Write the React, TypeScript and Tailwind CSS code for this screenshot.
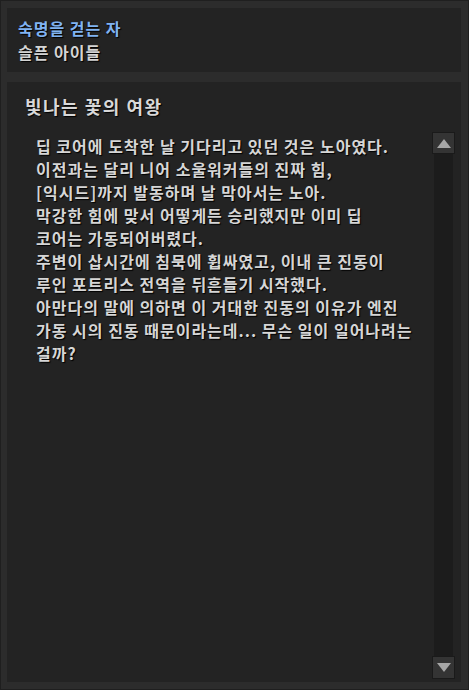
import React from "react";

const lines = [
  "딥 코어에 도착한 날 기다리고 있던 것은 노아였다.",
  "이전과는 달리 니어 소울워커들의 진짜 힘,",
  "[익시드]까지 발동하며 날 막아서는 노아.",
  "막강한 힘에 맞서 어떻게든 승리했지만 이미 딥",
  "코어는 가동되어버렸다.",
  "주변이 삽시간에 침묵에 휩싸였고, 이내 큰 진동이",
  "루인 포트리스 전역을 뒤흔들기 시작했다.",
  "아만다의 말에 의하면 이 거대한 진동의 이유가 엔진",
  "가동 시의 진동 때문이라는데... 무슨 일이 일어나려는",
  "걸까?",
];

export default function App() {
  return (
    <div
      className="w-[469px] h-[690px] bg-[#2c2c2c] border border-[#1f1f1f] pt-[7px] pl-[6px] pr-[7px] pb-[7px] flex flex-col [text-shadow:1px_1px_1px_#000]"
      style={{ fontFamily: '"Noto Sans CJK KR", "Noto Sans", sans-serif' }}
    >
      <div className="h-[64px] bg-[#232323] pl-[11px] pt-[10px] flex flex-col">
        <div className="text-[16px] leading-[21px] font-bold tracking-[1px] text-[#80b3f2]">숙명을 걷는 자</div>
        <div className="text-[16px] leading-[21px] font-bold tracking-[1px] text-[#d4d4d4] mt-[3px]">슬픈 아이들</div>
      </div>
      <div className="mt-[10px] flex-1 bg-[#232323] flex">
        <div className="flex-1 flex flex-col">
          <div className="pl-[18px] pt-[12px] text-[18px] leading-[24px] font-bold tracking-[1.5px] text-[#d8d8d8]">빛나는 꽃의 여왕</div>
          <div className="pl-[29px] pt-[17px] text-[16px] leading-[23px] font-bold tracking-[1px] text-[#d6d6d6] whitespace-nowrap">
            {lines.map((l, i) => (
              <div key={i}>{l}</div>
            ))}
          </div>
        </div>
        <div className="w-[23px] mr-[6px] mt-[50px] mb-[3px] flex flex-col">
          <div className="h-[22px] bg-[#343434] border border-[#1a1a1a] flex items-center justify-center">
            <svg width="14" height="9" viewBox="0 0 14 9">
              <polygon points="7,0 14,9 0,9" fill="#a6a6a6" />
            </svg>
          </div>
          <div className="flex-1 mx-[2px] bg-[#1c1c1c]" />
          <div className="h-[23px] bg-[#343434] border border-[#1a1a1a] flex items-center justify-center">
            <svg width="14" height="9" viewBox="0 0 14 9">
              <polygon points="0,0 14,0 7,9" fill="#a6a6a6" />
            </svg>
          </div>
        </div>
      </div>
    </div>
  );
}
